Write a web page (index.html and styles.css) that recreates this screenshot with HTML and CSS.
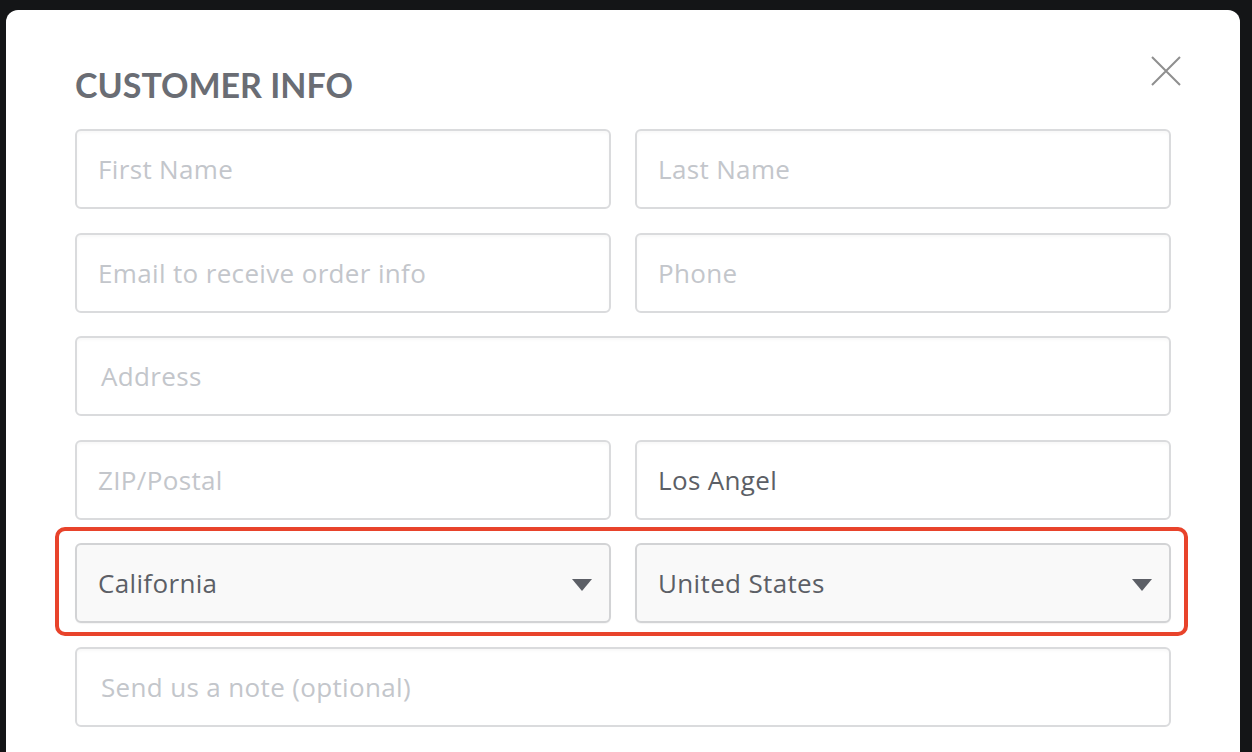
FILE: index.html
```html
<!DOCTYPE html>
<html lang="en">
<head>
<meta charset="utf-8">
<title>Customer Info</title>
<link rel="stylesheet" href="styles.css">
</head>
<body>
<div class="modal">
  <button class="close" aria-label="Close">
    <svg width="30" height="30" viewBox="0 0 30 30"><path d="M1 1 L29 29 M29 1 L1 29" stroke="#8f8f8f" stroke-width="2" fill="none"/></svg>
  </button>
  <h1 class="title">CUSTOMER INFO</h1>
  <form class="form">
    <div class="row">
      <div class="field placeholder">First Name</div>
      <div class="field placeholder">Last Name</div>
    </div>
    <div class="row">
      <div class="field placeholder">Email to receive order info</div>
      <div class="field placeholder">Phone</div>
    </div>
    <div class="row single">
      <div class="field placeholder wide">Address</div>
    </div>
    <div class="row">
      <div class="field placeholder">ZIP/Postal</div>
      <div class="field value">Los Angel</div>
    </div>
    <div class="row highlighted">
      <div class="field select value">California<span class="caret"></span></div>
      <div class="field select value">United States<span class="caret"></span></div>
    </div>
    <div class="row single">
      <div class="field placeholder wide">Send us a note (optional)</div>
    </div>
  </form>
</div>
</body>
</html>
```

FILE: styles.css
```css
html, body {
  margin: 0;
  padding: 0;
  height: 100%;
  overflow: hidden;
}
body {
  background: #141517;
}
.modal {
  position: relative;
  margin: 10px 0 0 6px;
  width: 1234px;
  height: 780px;
  background: #ffffff;
  border-radius: 12px;
  padding: 0 69px;
  box-sizing: border-box;
}
.close {
  position: absolute;
  top: 46px;
  left: 1145px;
  width: 30px;
  height: 30px;
  padding: 0;
  border: 0;
  background: none;
}
.close svg { display: block; }
.title {
  margin: 0;
  padding-top: 55px;
  height: 64px;
  box-sizing: content-box;
  font-family: "Lato", "Liberation Sans", sans-serif;
  font-weight: 700;
  font-size: 34px;
  line-height: 40px;
  letter-spacing: 0;
  color: #6a6d74;
}
.form {
  display: flex;
  flex-direction: column;
  gap: 23.6px;
  width: 1096px;
}
.row {
  display: grid;
  grid-template-columns: 1fr 1fr;
  gap: 24px;
}
.row.single {
  grid-template-columns: 1fr;
}
.row.highlighted {
  position: relative;
}
.row.highlighted::after {
  content: "";
  position: absolute;
  left: -20px;
  right: -17px;
  top: -16px;
  bottom: -13px;
  border: 4px solid #e8432b;
  border-radius: 10px;
  pointer-events: none;
}
.field {
  position: relative;
  height: 80px;
  box-sizing: border-box;
  border: 2px solid #dadbdd;
  border-radius: 6px;
  background: #ffffff;
  box-shadow: inset 0 2px 3px rgba(0, 0, 0, 0.03);
  display: flex;
  align-items: center;
  padding: 0 21px;
  font-family: "Open Sans", "Liberation Sans", sans-serif;
  font-size: 26px;
  letter-spacing: 0.35px;
}
.field.wide {
  padding-left: 24px;
}
.placeholder {
  color: #c3c6cb;
}
.value {
  color: #5c5f66;
}
.select {
  background: #f9f9f9;
  border-color: #d2d3d5;
  box-shadow: 0 1px 1px rgba(0, 0, 0, 0.04);
}
.caret {
  position: absolute;
  right: 17px;
  top: 34px;
  width: 0;
  height: 0;
  border-left: 10px solid transparent;
  border-right: 10px solid transparent;
  border-top: 12px solid #5c5f66;
}
```
